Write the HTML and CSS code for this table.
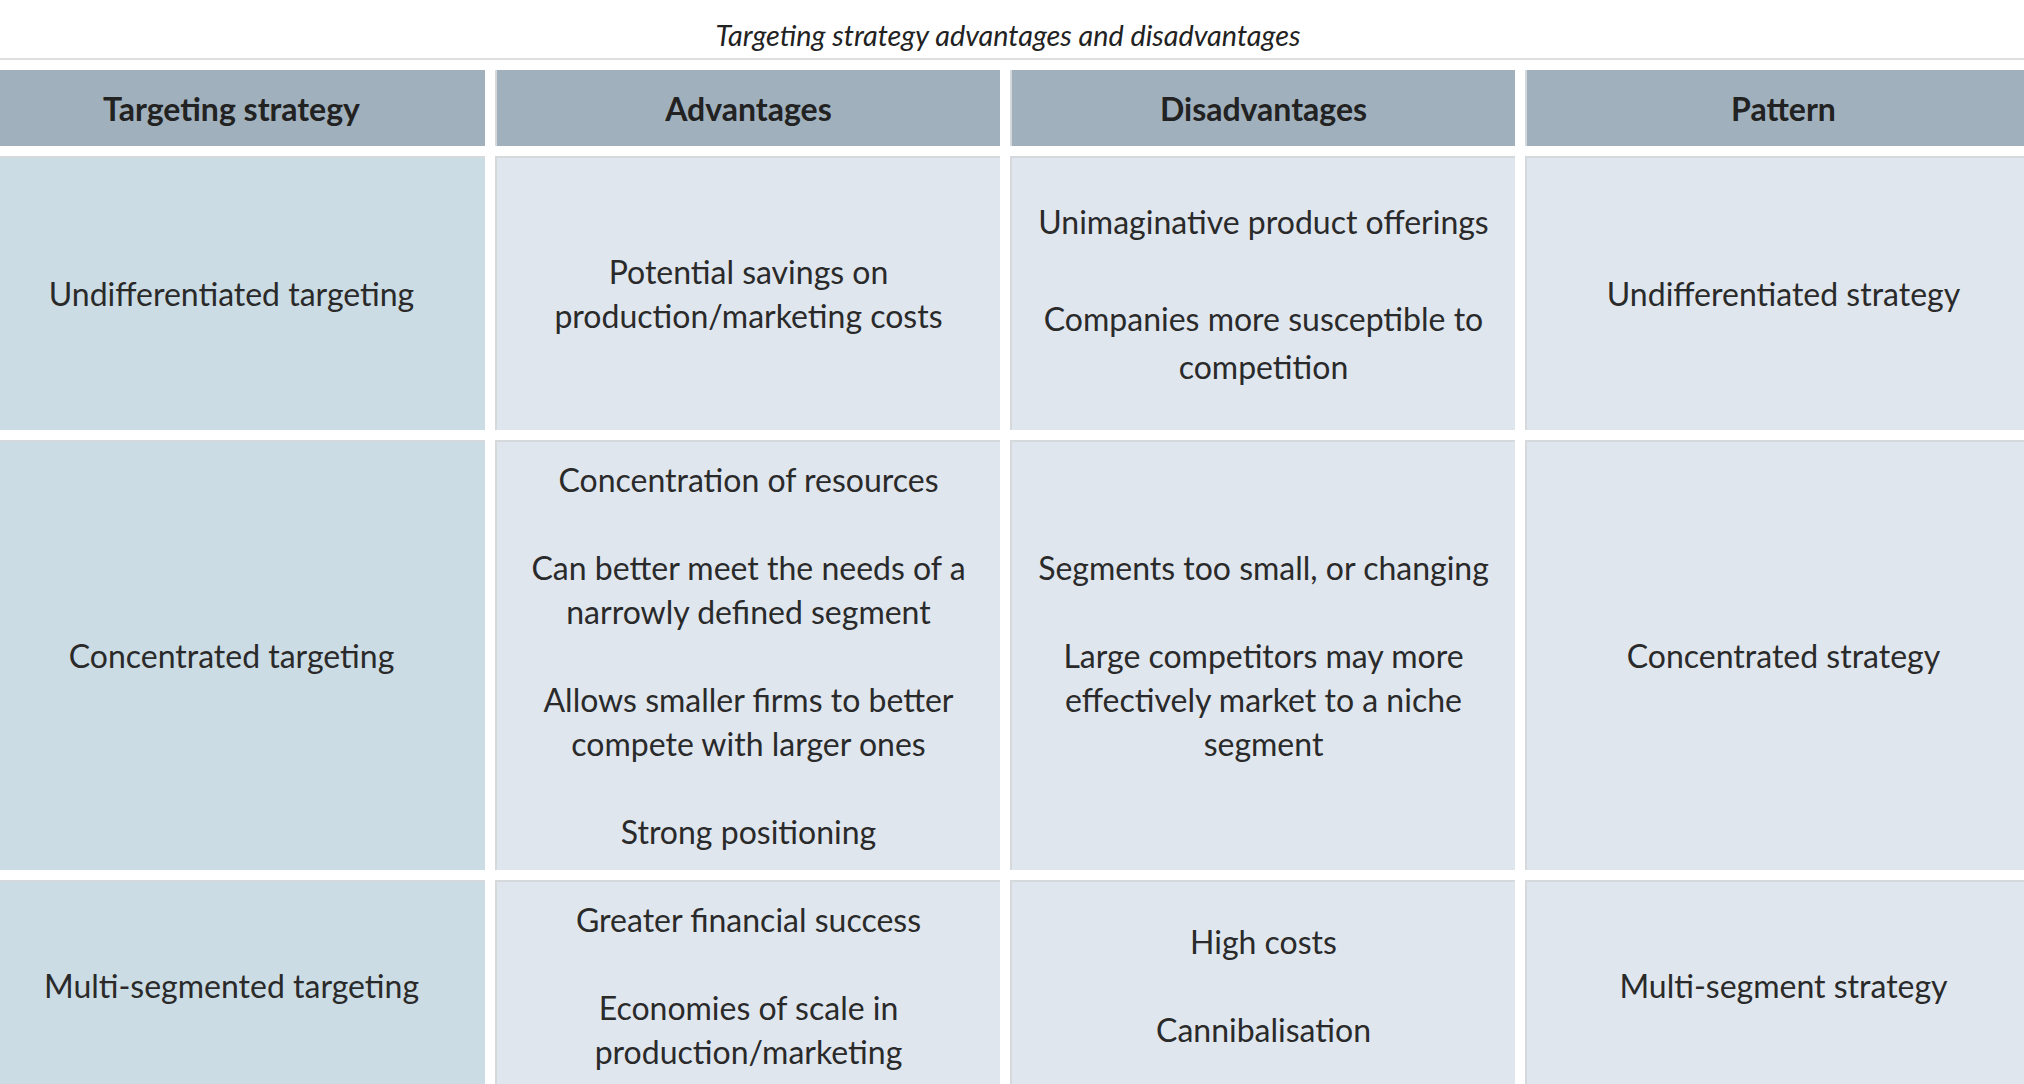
FILE: index.html
```html
<!DOCTYPE html>
<html lang="en">
<head>
<meta charset="utf-8">
<title>Targeting strategy advantages and disadvantages</title>
<link rel="stylesheet" href="styles.css">
</head>
<body>
<div class="wrap">
<table class="grid">
  <caption class="cap">Targeting strategy advantages and disadvantages</caption>
  <colgroup><col class="c1"><col class="c2"><col class="c3"><col class="c4"></colgroup>
  <thead>
    <tr>
      <th>Targeting strategy</th>
      <th>Advantages</th>
      <th>Disadvantages</th>
      <th>Pattern</th>
    </tr>
  </thead>
  <tbody>
    <tr class="tall">
      <td class="first"><p>Undifferentiated targeting</p></td>
      <td><p>Potential savings on production/marketing costs</p></td>
      <td class="loose"><p>Unimaginative product offerings</p><p>Companies more susceptible to competition</p></td>
      <td><p>Undifferentiated strategy</p></td>
    </tr>
    <tr>
      <td class="first"><p>Concentrated targeting</p></td>
      <td><p>Concentration of resources</p><p>Can better meet the needs of a narrowly defined segment</p><p>Allows smaller firms to better compete with larger ones</p><p>Strong positioning</p></td>
      <td><p>Segments too small, or changing</p><p>Large competitors may more effectively market to a niche segment</p></td>
      <td><p>Concentrated strategy</p></td>
    </tr>
    <tr>
      <td class="first"><p>Multi-segmented targeting</p></td>
      <td><p>Greater financial success</p><p>Economies of scale in production/marketing</p></td>
      <td><p>High costs</p><p>Cannibalisation</p></td>
      <td><p>Multi-segment strategy</p></td>
    </tr>
  </tbody>
</table>
</div>
</body>
</html>
```

FILE: styles.css
```css
html, body {
  margin: 0;
  padding: 0;
  background: #ffffff;
  overflow: hidden;
}

body {
  font-family: Lato, "Open Sans", "Liberation Sans", sans-serif;
  color: #2a2a2a;
}

.wrap {
  margin-left: -34px;
  width: 2084px;
}

.grid {
  width: 2084px;
  table-layout: fixed;
  border-collapse: separate;
  border-spacing: 10px;
}

.grid .c1 { width: 509px; }
.grid .c2 { width: 505px; }
.grid .c3 { width: 505px; }
.grid .c4 { width: 515px; }

.cap {
  font-style: italic;
  font-size: 28.8px;
  line-height: 34px;
  padding: 18px 0 6px;
  color: #222222;
  border-bottom: 2px solid #dedede;
  text-align: center;
}

.grid th {
  box-sizing: border-box;
  height: 76px;
  background: #a0b1bd;
  border-left: 2px solid #d4d8db;
  font-size: 32px;
  font-weight: 700;
  color: #222222;
  text-align: center;
  vertical-align: middle;
  padding: 0 16px;
}

.grid td {
  box-sizing: border-box;
  background: #dfe6ee;
  border-left: 2px solid #d6d9dc;
  border-top: 2px solid #d6d9dc;
  padding: 16px 16px;
  text-align: center;
  vertical-align: middle;
  font-size: 32px;
  line-height: 44px;
}

.grid td.first {
  background: #ccdce4;
}

.grid p {
  margin: 0;
}

.grid p + p {
  margin-top: 44px;
}

.grid .loose {
  line-height: 48px;
}

.grid .loose p + p {
  margin-top: 49px;
}

.tall td {
  height: 274px;
}
```
